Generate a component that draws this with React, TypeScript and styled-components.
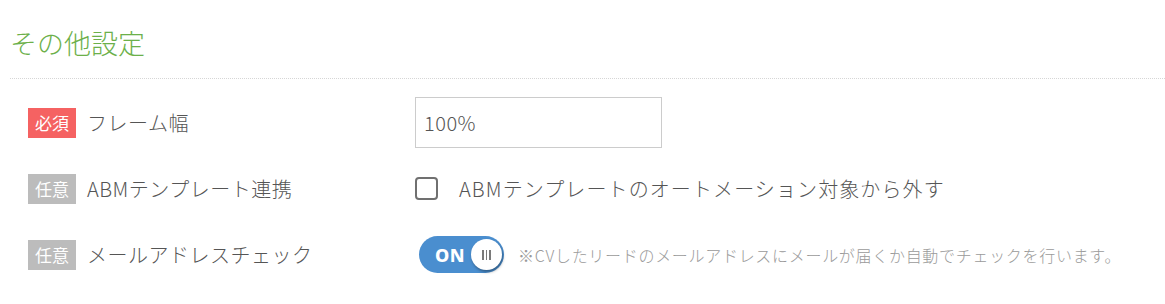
import React, { useState } from "react";
import styled, { createGlobalStyle } from "styled-components";

const GlobalStyle = createGlobalStyle`
  html, body {
    margin: 0;
    padding: 0;
    background: #ffffff;
  }
  body {
    font-family: "Noto Sans CJK JP", "Noto Sans", sans-serif;
    color: #555555;
  }
`;

type Requirement = "required" | "optional";

function App() {
  const [frameWidth, setFrameWidth] = useState("100%");
  const [excludeAbm, setExcludeAbm] = useState(false);
  const [mailCheck, setMailCheck] = useState(true);

  return (
    <>
      <GlobalStyle />
      <Section>
        <Title>その他設定</Title>
        <Rows>
          <Row>
            <LabelCell>
              <Badge kind="required">必須</Badge>
              <LabelText>フレーム幅</LabelText>
            </LabelCell>
            <TextInput
              value={frameWidth}
              onChange={(e) => setFrameWidth(e.target.value)}
            />
          </Row>

          <Row>
            <LabelCell>
              <Badge kind="optional">任意</Badge>
              <LabelText>ABMテンプレート連携</LabelText>
            </LabelCell>
            <CheckLabel>
              <CheckBox
                type="checkbox"
                checked={excludeAbm}
                onChange={(e) => setExcludeAbm(e.target.checked)}
              />
              <span>ABMテンプレートのオートメーション対象から外す</span>
            </CheckLabel>
          </Row>

          <Row>
            <LabelCell>
              <Badge kind="optional">任意</Badge>
              <LabelText>メールアドレスチェック</LabelText>
            </LabelCell>
            <ToggleWrap>
              <Toggle on={mailCheck} onClick={() => setMailCheck(!mailCheck)}>
                <ToggleText>{mailCheck ? "ON" : "OFF"}</ToggleText>
                <Knob>
                  <Grip />
                  <Grip />
                  <Grip />
                </Knob>
              </Toggle>
              <HelpText>
                ※CVしたリードのメールアドレスにメールが届くか自動でチェックを行います。
              </HelpText>
            </ToggleWrap>
          </Row>
        </Rows>
      </Section>
    </>
  );
}

export default App;

// styled components

const Section = styled.section`
  width: 1165px;
  height: 304px;
  padding-left: 10px;
  box-sizing: border-box;
  overflow: hidden;
`;

const Title = styled.h2`
  margin: 0;
  padding-top: 28px;
  padding-bottom: 20px;
  font-size: 27px;
  line-height: 30px;
  font-weight: 300;
  color: #6cb04a;
  border-bottom: 1px dotted #d6d6d6;
`;

const Rows = styled.div`
  display: flex;
  flex-direction: column;
  gap: 15px;
  padding-top: 18px;
  padding-left: 18px;
`;

const Row = styled.div`
  display: flex;
  align-items: center;
  min-height: 51px;
`;

const LabelCell = styled.div`
  width: 387px;
  flex-shrink: 0;
  display: flex;
  align-items: center;
  gap: 11px;
`;

const Badge = styled.span<{ kind: Requirement }>`
  display: inline-flex;
  align-items: center;
  justify-content: center;
  width: 48px;
  height: 30px;
  font-size: 17px;
  line-height: 1;
  color: #ffffff;
  background: ${(p) => (p.kind === "required" ? "#f56262" : "#bcbcbc")};
`;

const LabelText = styled.span`
  font-size: 20px;
  font-weight: 300;
  letter-spacing: 0.5px;
  color: #555555;
`;

const TextInput = styled.input`
  width: 247px;
  height: 51px;
  box-sizing: border-box;
  border: 1px solid #cccccc;
  padding: 0 8px;
  font-family: "Noto Sans CJK JP", "Noto Sans", sans-serif;
  font-size: 20px;
  font-weight: 300;
  letter-spacing: 0.5px;
  color: #555555;
  outline: none;
`;

const CheckLabel = styled.label`
  display: flex;
  align-items: center;
  gap: 21px;
  font-size: 20px;
  font-weight: 300;
  letter-spacing: 1.1px;
  color: #555555;
  cursor: pointer;
`;

const CheckBox = styled.input`
  appearance: none;
  margin: 0;
  width: 23px;
  height: 23px;
  border: 2px solid #707070;
  border-radius: 4px;
  box-sizing: border-box;
  background: #ffffff;
  cursor: pointer;

  &:checked {
    background: #4a8ecf;
    border-color: #4a8ecf;
  }
`;

const ToggleWrap = styled.div`
  display: flex;
  align-items: center;
  gap: 14px;
  margin-left: 4px;
`;

const Toggle = styled.button<{ on: boolean }>`
  display: flex;
  align-items: center;
  justify-content: space-between;
  width: 85px;
  height: 37px;
  padding: 0 2px 0 16px;
  box-sizing: border-box;
  border: none;
  border-radius: 19px;
  background: ${(p) => (p.on ? "#4a8ecf" : "#bbbbbb")};
  cursor: pointer;
`;

const ToggleText = styled.span`
  font-family: "Noto Sans", sans-serif;
  font-size: 18px;
  font-weight: 800;
  color: #ffffff;
  letter-spacing: 0.5px;
`;

const Knob = styled.span`
  display: flex;
  align-items: center;
  justify-content: center;
  gap: 2px;
  width: 31px;
  height: 31px;
  border-radius: 50%;
  background: #ffffff;
  box-shadow: 1px 2px 3px rgba(0, 0, 0, 0.35);
`;

const Grip = styled.span`
  width: 1.5px;
  height: 10px;
  background: #7a7a7a;
`;

const HelpText = styled.span`
  font-size: 16px;
  font-weight: 300;
  letter-spacing: 0.7px;
  color: #9a9a9a;
`;
